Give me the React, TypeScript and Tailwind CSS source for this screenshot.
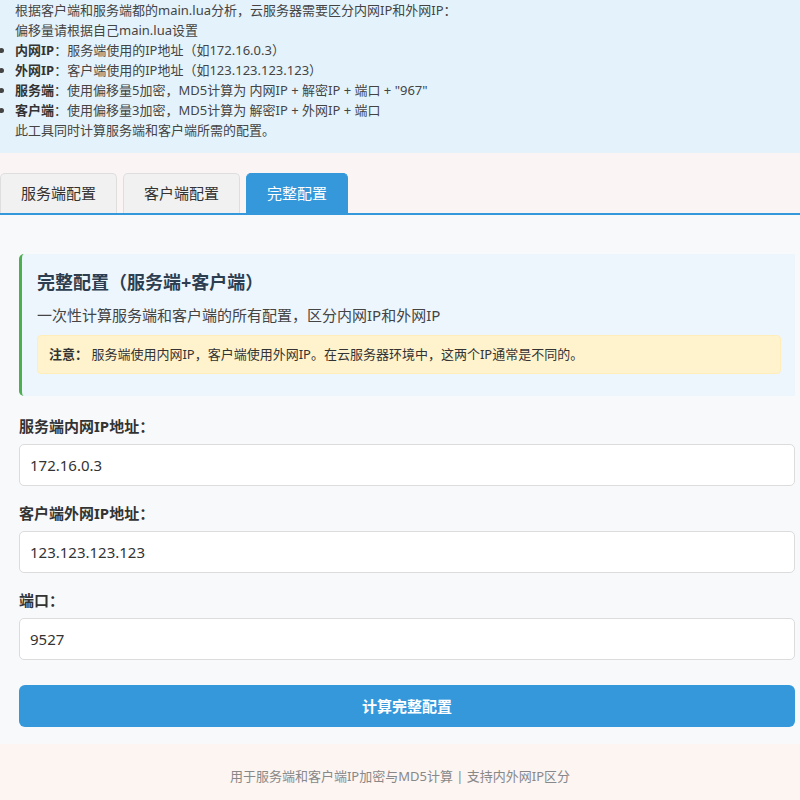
import React, { useState } from "react";

const tabs = ["服务端配置", "客户端配置", "完整配置"];

const Field = ({ label, value }: { label: string; value: string }) => (
  <div className="flex flex-col">
    <label className="text-[15px] leading-[22px] font-bold text-[#333]">{label}</label>
    <input
      className="mt-[7px] h-[42px] w-full rounded-[5px] border border-[#dcdcdc] bg-white px-[10px] text-[15px] text-[#333] outline-none"
      defaultValue={value}
    />
  </div>
);

export default function App() {
  const [active, setActive] = useState(2);

  return (
    <div
      className="min-h-[800px] w-[800px] overflow-hidden bg-[#fbf4f4] text-[#333]"
      style={{ fontFamily: '"Noto Sans", "Noto Sans CJK SC", sans-serif' }}
    >
      <div className="h-[153px] bg-[#e4f3fb] pl-[15px] text-[13px] leading-[20px] text-[#444]">
        <p>根据客户端和服务端都的main.lua分析，云服务器需要区分内网IP和外网IP：</p>
        <p>偏移量请根据自己main.lua设置</p>
        <ul className="list-disc pl-0">
          <li>
            <b className="text-[#333]">内网IP</b>：服务端使用的IP地址（如172.16.0.3）
          </li>
          <li>
            <b className="text-[#333]">外网IP</b>：客户端使用的IP地址（如123.123.123.123）
          </li>
          <li>
            <b className="text-[#333]">服务端</b>：使用偏移量5加密，MD5计算为 内网IP + 解密IP + 端口 + "967"
          </li>
          <li>
            <b className="text-[#333]">客户端</b>：使用偏移量3加密，MD5计算为 解密IP + 外网IP + 端口
          </li>
        </ul>
        <p>此工具同时计算服务端和客户端所需的配置。</p>
      </div>

      <div className="mt-[20px] flex gap-[6px] border-b-2 border-[#3498db]">
        {tabs.map((t, i) => (
          <button
            key={t}
            onClick={() => setActive(i)}
            className={
              i === active
                ? "h-[40px] rounded-t-[5px] border border-b-0 border-[#3498db] bg-[#3498db] px-[20px] text-[15px] text-white"
                : "h-[40px] rounded-t-[5px] border border-b-0 border-[#dedede] bg-[#f1f1f1] px-[20px] text-[15px] text-[#333]"
            }
          >
            {t}
          </button>
        ))}
      </div>

      <div className="bg-[#f8f9fb] pb-[17px] pl-[19px] pr-[5px] pt-[39px]">
        <div className="rounded-l-[5px] border-l-[3px] border-[#4caf50] bg-[#eef6fd] pb-[22px] pl-[15px] pr-[14px] pt-[15px]">
          <h3 className="text-[18px] leading-[26px] font-bold text-[#2c3e50]">完整配置（服务端+客户端）</h3>
          <p className="mt-[9px] text-[15px] leading-[22px] text-[#444]">一次性计算服务端和客户端的所有配置，区分内网IP和外网IP</p>
          <div className="mt-[9px] rounded-[4px] border border-[#ffeeba] bg-[#fff3cd] px-[11px] py-[9px] text-[13px] leading-[19px] text-[#333]">
            <b>注意：</b> 服务端使用内网IP，客户端使用外网IP。在云服务器环境中，这两个IP通常是不同的。
          </div>
        </div>

        <div className="mt-[19px] flex flex-col gap-[16px]">
          <Field label="服务端内网IP地址：" value="172.16.0.3" />
          <Field label="客户端外网IP地址：" value="123.123.123.123" />
          <Field label="端口：" value="9527" />
        </div>

        <button className="mt-[25px] h-[42px] w-full rounded-[6px] bg-[#3498db] text-[15px] font-bold text-white">
          计算完整配置
        </button>
      </div>

      <div className="bg-[#fcf5f2] pb-[14px] pt-[22px] text-center text-[13px] leading-[20px] text-[#888]">
        用于服务端和客户端IP加密与MD5计算 | 支持内外网IP区分
      </div>
    </div>
  );
}
